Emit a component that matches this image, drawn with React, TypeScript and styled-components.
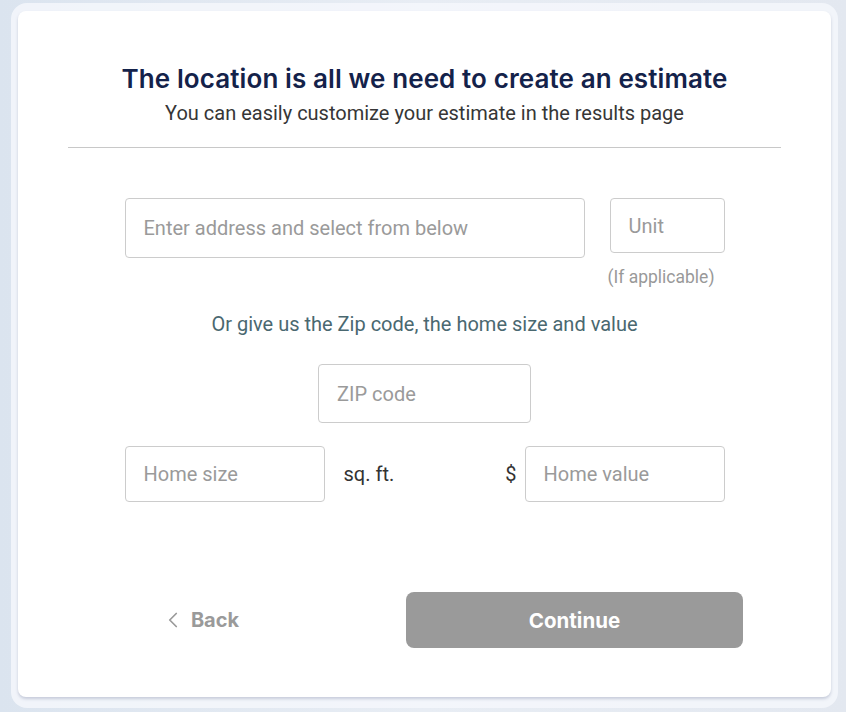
import React from 'react';
import styled, { createGlobalStyle } from 'styled-components';
import { ChevronLeft } from 'lucide-react';

const GlobalStyle = createGlobalStyle`
  html, body {
    margin: 0;
    padding: 0;
  }
  body {
    font-family: Roboto, "Liberation Sans", sans-serif;
    background: #e3e9f1;
  }
  * { box-sizing: border-box; }
`;

const Page = styled.div`
  min-height: 712px;
  padding: 3px 8px 4px 11px;
  background: linear-gradient(90deg, #dbe4ef 0%, #e8edf4 50%, #e3e8f0 100%);
`;

const Frame = styled.div`
  background: rgba(244, 247, 251, 0.85);
  border-radius: 16px;
  padding: 8px 7px 11px 7px;
`;

const Card = styled.div`
  background: #ffffff;
  border-radius: 8px;
  height: 686px;
  box-shadow: 0 2px 3px rgba(120, 130, 160, 0.35);
  display: flex;
  flex-direction: column;
  align-items: center;
  padding-top: 52px;
`;

const Title = styled.h1`
  margin: 0;
  font-family: Inter, "Open Sans", sans-serif;
  font-weight: 600;
  font-size: 26px;
  line-height: 32px;
  color: #14224a;
  letter-spacing: 0.1px;
`;

const Subtitle = styled.p`
  margin: 6px 0 0;
  font-size: 20px;
  line-height: 24px;
  color: #363636;
`;

const Divider = styled.hr`
  align-self: stretch;
  margin: 22px 50px 0;
  border: none;
  border-top: 1px solid #c8c8c8;
`;

const AddressRow = styled.div`
  margin-top: 50px;
  display: flex;
  gap: 25px;
  width: 600px;
`;

const Field = styled.input<{ $w: number; $h: number }>`
  flex-shrink: 0;
  width: ${p => p.$w}px;
  height: ${p => p.$h}px;
  border: 1px solid #cccccc;
  border-radius: 4px;
  padding: 0 18px;
  font-family: Roboto, "Liberation Sans", sans-serif;
  font-size: 20px;
  color: #333;
  background: #fff;
  outline: none;
  &::placeholder {
    color: #9a9a9a;
  }
`;

const UnitColumn = styled.div`
  width: 115px;
  flex-shrink: 0;
  display: flex;
  flex-direction: column;
  align-items: flex-end;
`;

const Hint = styled.span`
  margin-top: 14px;
  margin-right: 10px;
  font-size: 17.5px;
  line-height: 20px;
  color: #999999;
  white-space: nowrap;
`;

const OrText = styled.p`
  margin: 25px 0 0;
  font-size: 20px;
  line-height: 24px;
  color: #4a6870;
`;

const ZipWrap = styled.div`
  margin-top: 28px;
`;

const SizeRow = styled.div`
  margin-top: 23px;
  width: 600px;
  display: flex;
  justify-content: space-between;
  align-items: center;
`;

const Group = styled.div`
  display: flex;
  align-items: center;
`;

const Unit = styled.span<{ $gap: number }>`
  font-size: 20px;
  color: #333333;
  margin: 0 ${p => p.$gap}px;
`;

const ButtonRow = styled.div`
  align-self: stretch;
  margin-top: 90px;
  padding: 0 88px 0 104px;
  display: flex;
  justify-content: space-between;
`;

const BackButton = styled.button`
  width: 155px;
  height: 56px;
  border: none;
  background: transparent;
  display: flex;
  align-items: center;
  justify-content: center;
  gap: 5px;
  font-family: Inter, "Open Sans", sans-serif;
  font-weight: 700;
  font-size: 20px;
  color: #9a9a9a;
  cursor: pointer;
`;

const ContinueButton = styled.button`
  width: 337px;
  height: 56px;
  border: none;
  border-radius: 8px;
  background: #9a9a9a;
  color: #ffffff;
  font-family: Inter, "Open Sans", sans-serif;
  font-weight: 700;
  font-size: 20.5px;
`;

export default function App() {
  return (
    <>
      <GlobalStyle />
      <Page>
        <Frame>
          <Card>
            <Title>The location is all we need to create an estimate</Title>
            <Subtitle>You can easily customize your estimate in the results page</Subtitle>
            <Divider />
            <AddressRow>
              <Field $w={460} $h={60} placeholder="Enter address and select from below" />
              <UnitColumn>
                <Field $w={115} $h={55} placeholder="Unit" />
                <Hint>(If applicable)</Hint>
              </UnitColumn>
            </AddressRow>
            <OrText>Or give us the Zip code, the home size and value</OrText>
            <ZipWrap>
              <Field $w={213} $h={59} placeholder="ZIP code" />
            </ZipWrap>
            <SizeRow>
              <Group>
                <Field $w={200} $h={56} placeholder="Home size" />
                <Unit $gap={19}>sq. ft.</Unit>
              </Group>
              <Group>
                <Unit $gap={8}>$</Unit>
                <Field $w={200} $h={56} placeholder="Home value" />
              </Group>
            </SizeRow>
            <ButtonRow>
              <BackButton>
                <ChevronLeft size={26} strokeWidth={1.6} />
                Back
              </BackButton>
              <ContinueButton disabled>Continue</ContinueButton>
            </ButtonRow>
          </Card>
        </Frame>
      </Page>
    </>
  );
}
